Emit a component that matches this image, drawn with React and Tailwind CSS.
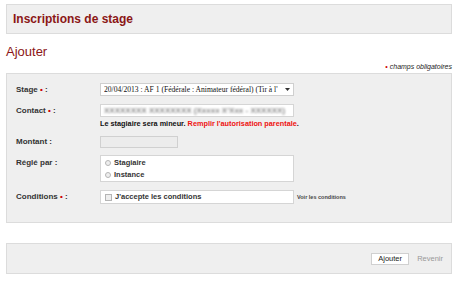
export default function App() {
  const label = "w-[93px] shrink-0 pl-[9px] text-[8px] font-bold text-[#333]";
  const req = <span className="text-[#cc0000]">•</span>;

  return (
    <div className="min-h-[282px] w-[472px] bg-white px-[6px] pt-[4px] font-['Liberation_Sans',Arial,sans-serif]">
      <div className="flex h-[30px] w-[446px] items-center border border-[#dcdcdc] bg-[#efefef] pl-[6px]">
        <h1 className="text-[12px] font-bold text-[#8b1616]">Inscriptions de stage</h1>
      </div>

      <h2 className="mt-[10px] text-[13px] leading-[15px] text-[#8b1616]">Ajouter</h2>

      <p className="mt-[3px] w-[446px] text-right text-[7px] italic leading-[9px] text-[#222]">
        <span className="text-[#cc0000] not-italic">• </span>champs obligatoires
      </p>

      <div className="mt-[2px] flex w-[446px] flex-col border border-[#dcdcdc] bg-[#efefef] pb-[18px] pt-[9px]">
        <div className="flex items-center">
          <span className={label}>
            Stage {req} :
          </span>
          <div className="flex h-[13px] w-[194px] items-center justify-between border border-[#cfcfcf] bg-white pl-[3px] pr-[3px] font-['Liberation_Serif',serif] text-[7.6px] text-[#111]">
            <span className="overflow-hidden whitespace-nowrap">20/04/2013 : AF 1 (Fédérale : Animateur fédéral) (Tir à l'</span>
            <svg width="5" height="3" viewBox="0 0 5 3" className="ml-[3px] shrink-0">
              <path d="M0 0h5L2.5 3z" fill="#333" />
            </svg>
          </div>
        </div>

        <div className="mt-[8px] flex items-center">
          <span className={label}>
            Contact {req} :
          </span>
          <div className="flex h-[13px] w-[194px] items-center overflow-hidden border border-[#d5d5d5] bg-white pl-[3px]">
            <span className="whitespace-nowrap text-[8px] font-bold text-[#8a8a8a] blur-[1.3px]">
              XXXXXXXX XXXXXXXX (Xxxxx X'Xxx - XXXXXX)
            </span>
          </div>
        </div>

        <p className="ml-[93px] mt-[2px] text-[7.3px] font-bold leading-[10px] text-[#111]">
          Le stagiaire sera mineur.{" "}
          <span className="text-[#ee1111]">Remplir l'autorisation parentale</span>.
        </p>

        <div className="mt-[7px] flex items-center">
          <span className={label}>Montant :</span>
          <div className="h-[12px] w-[78px] border border-[#d0d0d0] bg-[#ececec]" />
        </div>

        <div className="mt-[7px] flex items-start">
          <span className={`${label} pt-[2px]`}>Réglé par :</span>
          <div className="flex h-[27px] w-[194px] flex-col justify-center gap-[2px] border border-[#d5d5d5] bg-white pl-[4px]">
            {["Stagiaire", "Instance"].map((v) => (
              <label key={v} className="flex items-center gap-[3px] text-[7.5px] font-bold leading-[10px] text-[#333]">
                <span className="h-[6px] w-[6px] rounded-full border border-[#b5b5b5] bg-[#eee]" />
                {v}
              </label>
            ))}
          </div>
        </div>

        <div className="mt-[8px] flex items-center">
          <span className={label}>
            Conditions {req} :
          </span>
          <div className="flex h-[14px] w-[194px] items-center gap-[3px] border border-[#d5d5d5] bg-white pl-[4px] text-[7.5px] font-bold text-[#333]">
            <span className="h-[7px] w-[7px] border border-[#b5b5b5] bg-[#eee]" />
            J'accepte les conditions
          </div>
          <span className="ml-[3px] text-[5.5px] font-bold text-[#444]">Voir les conditions</span>
        </div>
      </div>

      <div className="mt-[20px] flex h-[31px] w-[446px] items-center justify-end gap-[8px] border border-[#dcdcdc] bg-[#efefef] pr-[8px]">
        <button className="h-[12px] w-[38px] border border-[#d0d0d0] bg-white text-[7.5px] leading-[10px] text-[#222]">
          Ajouter
        </button>
        <span className="text-[7.5px] text-[#999]">Revenir</span>
      </div>
    </div>
  );
}
